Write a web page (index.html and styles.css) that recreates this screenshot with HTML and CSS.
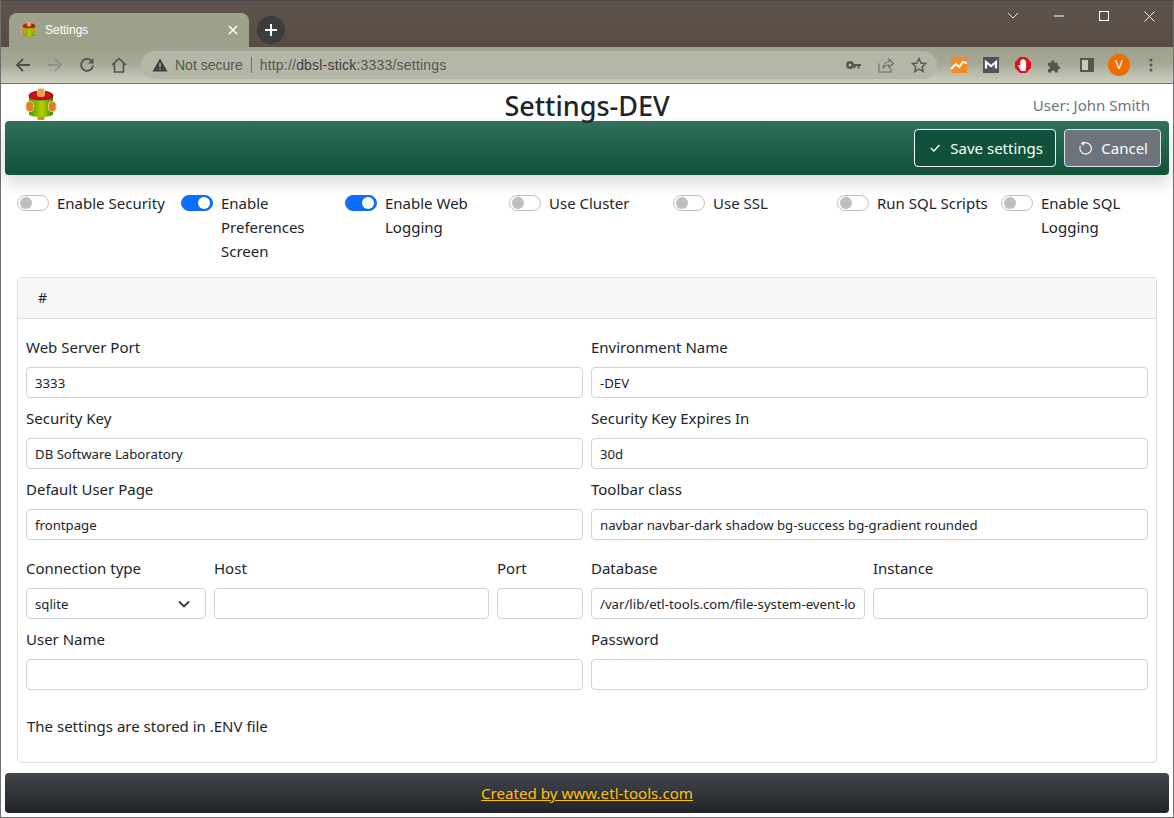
FILE: index.html
```html
<!DOCTYPE html>
<html lang="en">
<head>
  <meta charset="UTF-8" />
  <title>Settings</title>
  <link rel="stylesheet" href="styles.css">
</head>
<body>
  <svg class="defs" width="0" height="0">
    <defs>
      <linearGradient id="bodyGrad" x1="0" x2="1" y1="0" y2="0">
        <stop offset="0" stop-color="#4a9a10"/>
        <stop offset="0.55" stop-color="#b4d000"/>
        <stop offset="1" stop-color="#3a9010"/>
      </linearGradient>
      <symbol id="logo" viewBox="0 0 32 32">
        <rect x="12.500" y="26" width="7" height="6" rx="1.500" fill="#e08a1a"/>
        <path d="M4 7v19c0 1.800 5.500 3 12 3s12-1.200 12-3V7z" fill="url(#bodyGrad)"/>
        <rect x="1" y="13.500" width="7.500" height="10" rx="3" fill="#e0801f" stroke="#f5e6b8" stroke-width="0.700"/>
        <rect x="23.500" y="13.500" width="7.500" height="10" rx="3" fill="#e0801f" stroke="#f5e6b8" stroke-width="0.700"/>
        <ellipse cx="16" cy="7.500" rx="12" ry="4.500" fill="#d80f0f" stroke="#3a1010" stroke-width="0.700"/>
        <rect x="12.500" y="0.500" width="7" height="8" rx="2" fill="#e8a04a" stroke="#f5e0b0" stroke-width="0.600"/>
      </symbol>
    </defs>
  </svg>

  <div class="window">
    <!-- Browser chrome -->
    <div class="tabstrip">
      <div class="tab">
        <svg class="favicon" width="16" height="16"><use href="#logo"/></svg>
        <span class="tab-title">Settings</span>
        <svg class="tab-close" width="10" height="10" viewBox="0 0 10 10"><path d="M1 1l8 8M9 1l-8 8" stroke="#fff" stroke-width="1.500"/></svg>
      </div>
      <div class="new-tab">
        <svg width="14" height="14" viewBox="0 0 14 14"><path d="M7 1v12M1 7h12" stroke="#fff" stroke-width="2"/></svg>
      </div>
      <div class="window-controls">
        <svg width="12" height="8" viewBox="0 0 12 8"><path d="M1 1l5 5 5-5" fill="none" stroke="#e8e4e0"/></svg>
        <svg width="10" height="2" viewBox="0 0 10 2"><path d="M0 1h10" stroke="#fff"/></svg>
        <svg width="10" height="10" viewBox="0 0 10 10"><rect x="0.500" y="0.500" width="9" height="9" fill="none" stroke="#fff"/></svg>
        <svg width="11" height="11" viewBox="0 0 11 11"><path d="M0.500 0.500l10 10M10.500 0.500l-10 10" stroke="#fff"/></svg>
      </div>
    </div>

    <div class="toolbar">
      <div class="nav-buttons">
        <svg width="16" height="16" viewBox="0 0 16 16"><path d="M15 8H2M8 2L2 8l6 6" fill="none" stroke="#4f5350" stroke-width="1.800"/></svg>
        <svg width="16" height="16" viewBox="0 0 16 16"><path d="M1 8h13M8 2l6 6-6 6" fill="none" stroke="#8f938a" stroke-width="1.800"/></svg>
        <svg width="16" height="16" viewBox="0 0 16 16"><path d="M13.300 5A6 6 0 1 0 14 8.500" fill="none" stroke="#4f5350" stroke-width="1.800"/><path d="M14.500 1v5.500H9z" fill="#4f5350"/></svg>
        <svg width="16" height="16" viewBox="0 0 16 16"><path d="M1 8l7-6.500L15 8M3.500 6.500V15h9V6.500" fill="none" stroke="#4f5350" stroke-width="1.600"/></svg>
      </div>
      <div class="omnibox">
        <svg class="warn" width="16" height="14" viewBox="0 0 16 14"><path d="M8 0.500L15.500 13.500H0.500z" fill="#3c4043"/><path d="M8 5v4M8 10.300v1.500" stroke="#b4b7a6" stroke-width="1.400"/></svg>
        <span class="not-secure">Not secure</span>
        <span class="url"><span class="url-dim">http://</span>dbsl-stick<span class="url-dim">:3333/settings</span></span>
        <div class="omni-icons">
          <svg width="15" height="8" viewBox="0 0 15 8"><circle cx="4" cy="4" r="2.700" fill="none" stroke="#55584f" stroke-width="2.400"/><path d="M6 3h9v2h-1.500v2.500h-2V5H9.500v2h-2V5" fill="#55584f"/></svg>
          <svg width="16" height="16" viewBox="0 0 16 16"><path d="M1 6.500V15h12v-4M5 11c0-4 3-6 6-6V2l4.500 4.500L11 10.500V8C8.500 8 6.500 9 5 11z" fill="none" stroke="#6a6d63" stroke-width="1.100"/></svg>
          <svg width="16" height="16" viewBox="0 0 16 16"><path d="M8 1.500l2 4.500 4.800 0.500-3.600 3.200 1 4.800L8 12l-4.200 2.500 1-4.800L1.200 6.500 6 6z" fill="none" stroke="#55584f" stroke-width="1.400"/></svg>
        </div>
      </div>
      <div class="extensions">
        <svg width="16" height="16" viewBox="0 0 16 16"><rect width="16" height="16" fill="#f58a25"/><path d="M0 12l5-5 3 3 4-5 4 1" fill="none" stroke="#fff" stroke-width="2"/></svg>
        <svg width="16" height="16" viewBox="0 0 16 16"><rect width="16" height="16" fill="#4d5458"/><path d="M3 11.500V5l5 4 5-4v6.500" fill="none" stroke="#fff" stroke-width="2.200"/></svg>
        <svg width="16" height="16" viewBox="0 0 16 16"><path d="M5 0h6l5 5v6l-5 5H5l-5-5V5z" fill="#e0101a"/><path d="M3 8.500l1.300-.5 1 1.500V3.500h1.200V2.500h1V2h1.200v.8h1.200v1h1.200V10.500L10.500 14H6z" fill="#fff"/></svg>
        <svg width="15" height="15" viewBox="0 0 16 16"><path d="M1 5h3.500c-.5-3.500 4-3.500 3.500 0H11.500v3.500c3.500-.5 3.500 4 0 3.500V15.500H8.500c.5-3-4.500-3-4 0H1v-3.500c3 .5 3-4 0-3.500z" fill="#55584f"/></svg>
        <svg class="ext-panel" width="14" height="14" viewBox="0 0 14 14"><rect x="1" y="1" width="12" height="12" fill="#c9ccbc" stroke="#55584f" stroke-width="2"/><rect x="8" y="1" width="5" height="12" fill="#55584f"/></svg>
        <span class="avatar">V</span>
        <svg width="4" height="14" viewBox="0 0 4 14"><circle cx="2" cy="2" r="1.500" fill="#55584f"/><circle cx="2" cy="7" r="1.500" fill="#55584f"/><circle cx="2" cy="12" r="1.500" fill="#55584f"/></svg>
      </div>
    </div>

    <!-- Page -->
    <div class="page">
      <header class="page-header">
        <svg class="logo" width="32" height="32"><use href="#logo"/></svg>
        <h1>Settings-DEV</h1>
        <span class="user">User: John Smith</span>
      </header>

      <nav class="topbar">
        <button class="btn btn-save">
          <svg width="12" height="10" viewBox="0 0 12 10"><path d="M1 5l3.500 3.500L11 1.500" fill="none" stroke="#fff" stroke-width="1.500"/></svg>
          Save settings
        </button>
        <button class="btn btn-cancel">
          <svg width="14" height="14" viewBox="0 0 14 14"><path d="M4 2.200A6 6 0 1 1 1.500 5" fill="none" stroke="#fff" stroke-width="1.200"/><path d="M5 0v4.500L2 2.200z" fill="#fff"/></svg>
          Cancel
        </button>
      </nav>

      <div class="switches">
        <label class="switch-item"><span class="switch"></span><span>Enable Security</span></label>
        <label class="switch-item"><span class="switch on"></span><span>Enable Preferences Screen</span></label>
        <label class="switch-item"><span class="switch on"></span><span>Enable Web Logging</span></label>
        <label class="switch-item"><span class="switch"></span><span>Use Cluster</span></label>
        <label class="switch-item"><span class="switch"></span><span>Use SSL</span></label>
        <label class="switch-item"><span class="switch"></span><span>Run SQL Scripts</span></label>
        <label class="switch-item"><span class="switch"></span><span>Enable SQL Logging</span></label>
      </div>

      <section class="card">
        <div class="card-header">#</div>
        <div class="card-body">
          <div class="form-grid">
            <div class="field"><label>Web Server Port</label><input type="text" value="3333"></div>
            <div class="field"><label>Environment Name</label><input type="text" value="-DEV"></div>
            <div class="field"><label>Security Key</label><input type="text" value="DB Software Laboratory"></div>
            <div class="field"><label>Security Key Expires In</label><input type="text" value="30d"></div>
            <div class="field"><label>Default User Page</label><input type="text" value="frontpage"></div>
            <div class="field"><label>Toolbar class</label><input type="text" value="navbar navbar-dark shadow bg-success bg-gradient rounded"></div>
          </div>

          <div class="form-grid conn-grid">
            <div class="conn-left">
              <div class="field">
                <label>Connection type</label>
                <div class="select">
                  <span>sqlite</span>
                  <svg width="12" height="8" viewBox="0 0 12 8"><path d="M1 1.500l5 5 5-5" fill="none" stroke="#343a40" stroke-width="1.800"/></svg>
                </div>
              </div>
              <div class="field"><label>Host</label><input type="text"></div>
              <div class="field"><label>Port</label><input type="text"></div>
            </div>
            <div class="conn-right">
              <div class="field"><label>Database</label><input type="text" value="/var/lib/etl-tools.com/file-system-event-log.db"></div>
              <div class="field"><label>Instance</label><input type="text"></div>
            </div>
            <div class="field"><label>User Name</label><input type="text"></div>
            <div class="field"><label>Password</label><input type="text"></div>
          </div>

          <p class="note">The settings are stored in .ENV file</p>
        </div>
      </section>

      <footer class="footer"><a href="#">Created by www.etl-tools.com</a></footer>
    </div>
  </div>
</body>
</html>
```

FILE: styles.css
```css
* {
  box-sizing: border-box;
}

html, body {
  margin: 0;
  padding: 0;
  height: 100%;
}

body {
  font-family: "Noto Sans", "Open Sans", sans-serif;
  overflow: hidden;
  background: #fff;
}

.defs {
  display: block;
  height: 0;
}

.window {
  width: 1174px;
  height: 818px;
  display: flex;
  flex-direction: column;
  border-left: 1px solid #6f6f6f;
  border-right: 1px solid #6f6f6f;
  border-bottom: 1px solid #6f6f6f;
  border-top: 1px solid #4a4a4a;
}

/* Browser chrome */
.tabstrip {
  height: 46px;
  background: linear-gradient(to bottom, #5f544b, #574c44);
  display: flex;
  align-items: flex-end;
  padding-left: 8px;
  flex: none;
}

.tab {
  width: 240px;
  height: 34px;
  background: #9ea28c;
  border-radius: 8px 8px 0 0;
  display: flex;
  align-items: center;
  padding: 0 11px 0 12px;
  color: #fff;
  font-family: "Liberation Sans", sans-serif;
  font-size: 12px;
}

.tab-title {
  margin-left: 8px;
  flex: 1;
}

.new-tab {
  width: 28px;
  height: 28px;
  border-radius: 50%;
  background: #3c3c3c;
  margin: 0 0 3px 8px;
  display: flex;
  align-items: center;
  justify-content: center;
}

.window-controls {
  display: flex;
  align-items: center;
  margin-left: auto;
  align-self: flex-start;
  height: 29px;
  gap: 35px;
  padding-right: 18px;
  padding-top: 1px;
}

.toolbar {
  height: 37px;
  background: linear-gradient(to bottom, #9ea28c 0, #a5a894 45%, #cdd0c0 100%);
  border-bottom: 1px solid #6f6f6f;
  display: flex;
  align-items: center;
  flex: none;
}

.nav-buttons {
  display: flex;
  align-items: center;
  gap: 16px;
  padding-left: 14px;
  width: 140px;
}

.omnibox {
  width: 796px;
  height: 28px;
  background: #b4b7a6;
  border-radius: 14px;
  display: flex;
  align-items: center;
  padding: 0 10px 0 11px;
  font-family: "Liberation Sans", sans-serif;
  font-size: 14px;
  color: #3c4043;
}

.not-secure {
  margin-left: 7px;
  padding-right: 8px;
  border-right: 1px solid #70736a;
  line-height: 16px;
  color: #55584f;
}

.url {
  margin-left: 8px;
  letter-spacing: 0.2px;
}

.url-dim {
  color: #55584f;
}

.omni-icons {
  margin-left: auto;
  display: flex;
  align-items: center;
  gap: 17px;
}

.extensions {
  display: flex;
  align-items: center;
  margin-left: 14px;
  gap: 16px;
}

.ext-panel {
  margin-left: 2px;
}

.avatar {
  width: 22px;
  height: 22px;
  border-radius: 50%;
  background: #ef6c00;
  color: #fff;
  font-family: "Liberation Sans", sans-serif;
  font-size: 12px;
  display: flex;
  align-items: center;
  justify-content: center;
  margin: 0 3px 0 -2px;
}

/* Page */
.page {
  flex: 1;
  display: flex;
  flex-direction: column;
  padding: 0 4px;
  color: #212529;
  font-size: 15px;
  min-height: 0;
}

.page-header {
  height: 37px;
  display: flex;
  align-items: flex-start;
  justify-content: space-between;
  position: relative;
  padding: 4px 19px 0 20px;
}

.page-header h1 {
  position: absolute;
  left: 0;
  right: 0;
  top: 6px;
  margin: 0;
  text-align: center;
  font-size: 27px;
  line-height: 32px;
  font-weight: 500;
}

.user {
  color: #6c757d;
  line-height: 24px;
  margin-top: 5px;
}

.topbar {
  height: 54px;
  border-radius: 4px;
  background: linear-gradient(to bottom, #31705b, #0f5239);
  box-shadow: 0 8px 16px rgba(0, 0, 0, 0.15);
  display: flex;
  align-items: center;
  justify-content: flex-end;
  gap: 8px;
  padding: 0 8px;
  flex: none;
}

.btn {
  height: 38px;
  border: 1px solid #fff;
  border-radius: 4px;
  color: #fff;
  font: inherit;
  white-space: nowrap;
  display: flex;
  align-items: center;
  gap: 10px;
  padding: 0 12px 0 15px;
}

.btn-save {
  background: #0f5239;
  width: 142px;
}

.btn-cancel {
  background: #6c757d;
  width: 97px;
  border-color: #dfe2e5;
  padding-left: 14px;
  gap: 9px;
}

.switches {
  display: grid;
  grid-template-columns: repeat(7, 164px);
  padding: 16px 0 0 12px;
  height: 102px;
  flex: none;
}

.switch-item {
  display: flex;
  align-items: flex-start;
  gap: 8px;
  line-height: 24px;
}

.switch {
  flex: none;
  width: 32px;
  height: 16px;
  margin: 4px 0;
  border-radius: 8px;
  border: 1px solid #bfbfbf;
  background: #fff;
  display: flex;
  align-items: center;
  padding: 0 2px;
}

.switch::before {
  content: "";
  width: 12px;
  height: 12px;
  border-radius: 50%;
  background: #bfbfbf;
}

.switch.on {
  background: #0d6efd;
  border-color: #0d6efd;
  justify-content: flex-end;
}

.switch.on::before {
  background: #fff;
}

.card {
  margin: 0 12px;
  height: 486px;
  border: 1px solid #dfdfdf;
  border-radius: 4px;
  flex: none;
}

.card-header {
  height: 41px;
  background: #f7f7f7;
  border-bottom: 1px solid #dfdfdf;
  border-radius: 3px 3px 0 0;
  padding: 8px 20px;
  line-height: 24px;
  font-size: 14px;
}

.card-body {
  padding: 8px 8px 0;
}

.form-grid {
  display: grid;
  grid-template-columns: 1fr 1fr;
  column-gap: 8px;
}

.conn-grid {
  margin-top: 8px;
}

.conn-left {
  display: grid;
  grid-template-columns: 180px 275px 86px;
  column-gap: 8px;
}

.conn-right {
  display: grid;
  grid-template-columns: 274px 275px;
  column-gap: 8px;
}

.field label {
  display: block;
  line-height: 24px;
  padding: 8px 0;
}

.field input,
.select {
  display: flex;
  align-items: center;
  width: 100%;
  height: 31px;
  padding: 1px 8px 0;
  border: 1px solid #ced4da;
  border-radius: 4px;
  background: #fff;
  font-family: inherit;
  font-size: 13.200px;
  color: #212529;
  outline: none;
}

.select {
  justify-content: space-between;
  padding-right: 15px;
}

.note {
  margin: 24px 0 0 1px;
  line-height: 24px;
}

.footer {
  margin-top: 10px;
  height: 40px;
  border-radius: 4px;
  background: linear-gradient(to bottom, #42454a, #212529);
  display: flex;
  align-items: center;
  justify-content: center;
  flex: none;
  font-size: 15.150px;
}

.footer a {
  color: #ffc107;
}
```
